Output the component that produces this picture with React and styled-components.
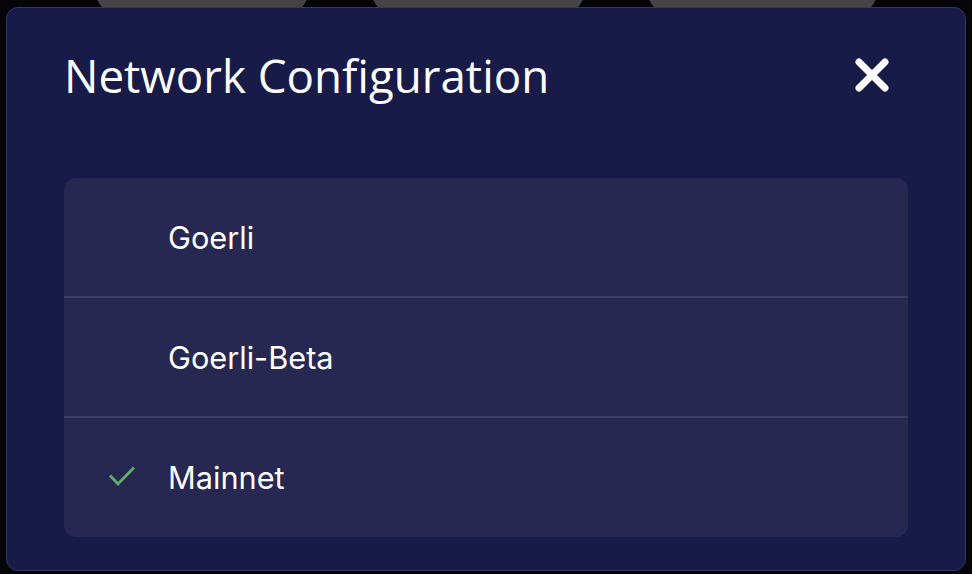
import React, { useState } from "react";
import styled, { createGlobalStyle } from "styled-components";

const networks = ["Goerli", "Goerli-Beta", "Mainnet"];

const App = () => {
  const [selected, setSelected] = useState("Mainnet");

  return (
    <>
      <GlobalStyle />
      <Page>
        <Tabs>
          <Tab $w={212} />
          <Tab $w={212} />
          <Tab $w={229} />
        </Tabs>
      </Page>
      <Modal>
        <Header>
          <Title>Network Configuration</Title>
          <CloseButton aria-label="close">
            <svg width="36" height="36" viewBox="0 0 36 36">
              <path
                d="M5 5 L31 31 M31 5 L5 31"
                stroke="#fff"
                strokeWidth="7"
                strokeLinecap="round"
                fill="none"
              />
            </svg>
          </CloseButton>
        </Header>
        <List>
          {networks.map((name) => (
            <Row key={name} onClick={() => setSelected(name)}>
              <Check>
                {selected === name && (
                  <svg width="28" height="22" viewBox="0 0 28 22">
                    <path
                      d="M2 10.5 L10 19 L26 2.5"
                      stroke="#62ad6d"
                      strokeWidth="2.8"
                      fill="none"
                    />
                  </svg>
                )}
              </Check>
              <Name>{name}</Name>
            </Row>
          ))}
        </List>
      </Modal>
    </>
  );
};

export default App;

const GlobalStyle = createGlobalStyle`
  body {
    margin: 0;
    background: #050509;
    font-family: "Inter", "Noto Sans", sans-serif;
  }
`;

const Page = styled.div`
  width: 972px;
  height: 574px;
  overflow: hidden;
`;
const Tabs = styled.div`
  display: flex;
  gap: 64px;
  padding-left: 96px;
  margin-top: -30px;
`;
const Tab = styled.div`
  width: ${(p) => p.$w}px;
  height: 44px;
  background: #444444;
  border-radius: 22px;
`;
const Modal = styled.div`
  position: absolute;
  left: 6px;
  top: 7px;
  width: 958px;
  height: 562px;
  background: #181a48;
  border: 1px solid #34376a;
  border-radius: 12px;
  display: flex;
  flex-direction: column;
`;
const Header = styled.div`
  display: flex;
  align-items: center;
  justify-content: space-between;
  height: 134px;
  padding: 0 75px 0 57px;
  box-sizing: border-box;
`;
const Title = styled.h1`
  margin: 0;
  font-family: "Open Sans", sans-serif;
  font-weight: 400;
  font-size: 45.7px;
  color: #ffffff;
`;
const CloseButton = styled.div`
  display: flex;
  cursor: pointer;
`;
const List = styled.div`
  margin: 36px 57px 0 57px;
  background: #272851;
  border-radius: 12px;
  display: flex;
  flex-direction: column;
`;
const Row = styled.div`
  display: flex;
  align-items: center;
  height: 118px;
  cursor: pointer;
  &:last-child {
    height: 119px;
  }
  & + & {
    border-top: 2px solid #3a3c68;
  }
`;
const Check = styled.div`
  width: 104px;
  display: flex;
  padding: 0 0 4px 44px;
  box-sizing: border-box;
`;
const Name = styled.span`
  font-size: 30.7px;
  color: #ffffff;
`;
